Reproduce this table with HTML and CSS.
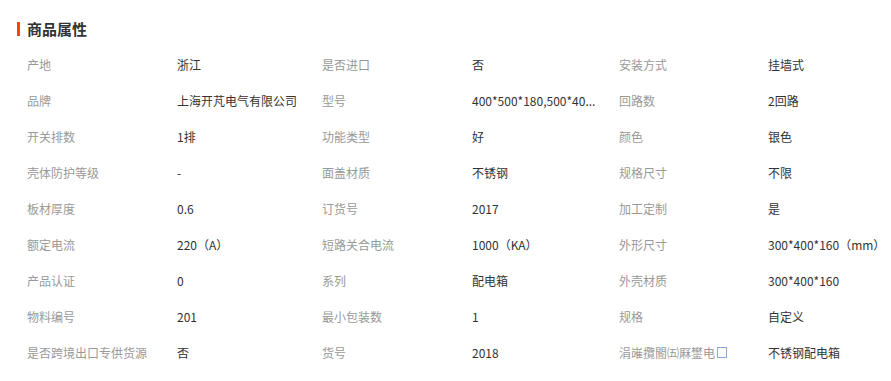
FILE: index.html
```html
<!DOCTYPE html>
<html lang="zh-CN">
<head>
<meta charset="utf-8">
<title>商品属性</title>
<link rel="stylesheet" href="styles.css">
</head>
<body>
<div class="attrs">
  <h2 class="title"><span class="bar"></span>商品属性</h2>
  <div class="grid">
    <div class="k">产地</div><div class="v">浙江</div>
    <div class="k">是否进口</div><div class="v">否</div>
    <div class="k">安装方式</div><div class="v">挂墙式</div>

    <div class="k">品牌</div><div class="v">上海开芃电气有限公司</div>
    <div class="k">型号</div><div class="v">400*500*180,500*40...</div>
    <div class="k">回路数</div><div class="v">2回路</div>

    <div class="k">开关排数</div><div class="v">1排</div>
    <div class="k">功能类型</div><div class="v">好</div>
    <div class="k">颜色</div><div class="v">银色</div>

    <div class="k">壳体防护等级</div><div class="v">-</div>
    <div class="k">面盖材质</div><div class="v">不锈钢</div>
    <div class="k">规格尺寸</div><div class="v">不限</div>

    <div class="k">板材厚度</div><div class="v">0.6</div>
    <div class="k">订货号</div><div class="v">2017</div>
    <div class="k">加工定制</div><div class="v">是</div>

    <div class="k">额定电流</div><div class="v">220（A）</div>
    <div class="k">短路关合电流</div><div class="v">1000（KA）</div>
    <div class="k">外形尺寸</div><div class="v">300*400*160（mm）</div>

    <div class="k">产品认证</div><div class="v">0</div>
    <div class="k">系列</div><div class="v">配电箱</div>
    <div class="k">外壳材质</div><div class="v">300*400*160</div>

    <div class="k">物料编号</div><div class="v">201</div>
    <div class="k">最小包装数</div><div class="v">1</div>
    <div class="k">规格</div><div class="v">自定义</div>

    <div class="k">是否跨境出口专供货源</div><div class="v">否</div>
    <div class="k">货号</div><div class="v">2018</div>
    <div class="k">涓嶉攬閽㈤厤鐢电<span class="box"></span></div><div class="v">不锈钢配电箱</div>
  </div>
</div>
</body>
</html>
```

FILE: styles.css
```css
html, body {
  margin: 0;
  padding: 0;
  background: #fff;
}
body {
  font-family: "Noto Sans CJK SC", "Microsoft YaHei", sans-serif;
  font-size: 12px;
  color: #333;
}
.attrs {
  padding: 19px 0 0 17px;
}
.title {
  display: flex;
  align-items: center;
  margin: 0;
  height: 20px;
  font-size: 15px;
  font-weight: bold;
  color: #333;
  line-height: 20px;
}
.bar {
  display: inline-block;
  width: 3px;
  height: 14px;
  background: #ff4400;
  margin-right: 7px;
}
.grid {
  display: grid;
  grid-template-columns: 150px 145px 150px 147px 149px 1fr;
  grid-auto-rows: 36px;
  margin-top: 7px;
}
.k, .v {
  display: flex;
  align-items: center;
  padding-left: 10px;
  white-space: nowrap;
  overflow: hidden;
}
.k {
  color: #999;
}
.v {
  color: #333;
}
.box {
  display: inline-block;
  width: 8px;
  height: 9px;
  border: 1px solid #8fa8d8;
  margin-left: 2px;
}
```
